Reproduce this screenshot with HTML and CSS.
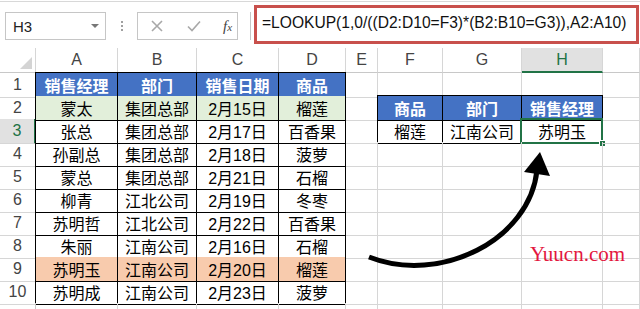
FILE: index.html
```html
<!DOCTYPE html>
<html lang="zh-CN">
<head>
    <meta charset="UTF-8">
    <title>LOOKUP 多条件查询</title>
    <link rel="stylesheet" href="styles.css">
</head>
<body>

<div class="toolbar">
    <div class="namebox">
        <span>H3</span>
        <span class="drop"></span>
    </div>
    <div class="dots"><i></i><i></i><i></i></div>
    <div class="funcbox">
        <svg width="12" height="12" viewBox="0 0 12 12"><path d="M1 1L11 11M11 1L1 11" stroke="#a8a8a8" stroke-width="1.6"/></svg>
        <svg width="14" height="12" viewBox="0 0 14 12"><path d="M1 6.5L5 10.5L13 1.5" stroke="#a8a8a8" stroke-width="1.6" fill="none"/></svg>
        <span class="fx">f<small>x</small></span>
    </div>
    <div class="formula-edge"></div>
    <div class="formula">=LOOKUP(1,0/((D2:D10=F3)*(B2:B10=G3)),A2:A10)</div>
</div>

<div class="sheet">
    <div class="row colhead">
        <div class="c corner"><span class="tri"></span></div>
        <div class="c">A</div><div class="c">B</div><div class="c">C</div><div class="c">D</div>
        <div class="c">E</div><div class="c">F</div><div class="c">G</div><div class="c active-col">H</div><div class="c"></div>
    </div>
    <div class="row">
        <div class="c rh">1</div>
        <div class="c th left top">销售经理</div><div class="c th top">部门</div><div class="c th top">销售日期</div><div class="c th top">商品</div>
        <div class="c"></div><div class="c"></div><div class="c"></div><div class="c"></div><div class="c"></div>
    </div>
    <div class="row">
        <div class="c rh">2</div>
        <div class="c tb green left">蒙太</div><div class="c tb green">集团总部</div><div class="c tb green">2月15日</div><div class="c tb green">榴莲</div>
        <div class="c"></div><div class="c th left top">商品</div><div class="c th top">部门</div><div class="c th top">销售经理</div><div class="c"></div>
    </div>
    <div class="row">
        <div class="c rh active-row">3</div>
        <div class="c tb left">张总</div><div class="c tb">集团总部</div><div class="c tb">2月17日</div><div class="c tb">百香果</div>
        <div class="c"></div><div class="c tb left">榴莲</div><div class="c tb">江南公司</div><div class="c tb sel">苏明玉</div><div class="c"></div>
    </div>
    <div class="row">
        <div class="c rh">4</div>
        <div class="c tb left">孙副总</div><div class="c tb">集团总部</div><div class="c tb">2月18日</div><div class="c tb">菠萝</div>
        <div class="c"></div><div class="c"></div><div class="c"></div><div class="c"></div><div class="c"></div>
    </div>
    <div class="row">
        <div class="c rh">5</div>
        <div class="c tb left">蒙总</div><div class="c tb">集团总部</div><div class="c tb">2月21日</div><div class="c tb">石榴</div>
        <div class="c"></div><div class="c"></div><div class="c"></div><div class="c"></div><div class="c"></div>
    </div>
    <div class="row">
        <div class="c rh">6</div>
        <div class="c tb left">柳青</div><div class="c tb">江北公司</div><div class="c tb">2月19日</div><div class="c tb">冬枣</div>
        <div class="c"></div><div class="c"></div><div class="c"></div><div class="c"></div><div class="c"></div>
    </div>
    <div class="row">
        <div class="c rh">7</div>
        <div class="c tb left">苏明哲</div><div class="c tb">江北公司</div><div class="c tb">2月22日</div><div class="c tb">百香果</div>
        <div class="c"></div><div class="c"></div><div class="c"></div><div class="c"></div><div class="c"></div>
    </div>
    <div class="row">
        <div class="c rh">8</div>
        <div class="c tb left">朱丽</div><div class="c tb">江南公司</div><div class="c tb">2月16日</div><div class="c tb">石榴</div>
        <div class="c"></div><div class="c"></div><div class="c"></div><div class="c"></div><div class="c"></div>
    </div>
    <div class="row">
        <div class="c rh">9</div>
        <div class="c tb orange left">苏明玉</div><div class="c tb orange">江南公司</div><div class="c tb orange">2月20日</div><div class="c tb orange">榴莲</div>
        <div class="c"></div><div class="c"></div><div class="c"></div><div class="c"></div><div class="c"></div>
    </div>
    <div class="row">
        <div class="c rh">10</div>
        <div class="c tb left">苏明成</div><div class="c tb">江南公司</div><div class="c tb">2月23日</div><div class="c tb">菠萝</div>
        <div class="c"></div><div class="c"></div><div class="c"></div><div class="c"></div><div class="c"></div>
    </div>
    <div class="row">
        <div class="c rh"></div>
        <div class="c"></div><div class="c"></div><div class="c"></div><div class="c"></div>
        <div class="c"></div><div class="c"></div><div class="c"></div><div class="c"></div><div class="c"></div>
    </div>
</div>

<!-- 标注箭头 -->
<svg class="arrow" width="640" height="309" viewBox="0 0 640 309">
    <path d="M369 257 C440 285, 530 240, 537 170" stroke="#000" stroke-width="5" fill="none"/>
    <path d="M540 152 L524 172 L550 176 Z" fill="#000"/>
</svg>

<div class="watermark">Yuucn.com</div>

</body>
</html>
```

FILE: styles.css
```css
body {
    margin: 0;
    width: 640px;
    height: 309px;
    overflow: hidden;
    background: #fff;
    font-family: "Liberation Sans", "Noto Sans CJK SC", sans-serif;
    color: #000;
}

/* 编辑栏 */
.toolbar {
    display: flex;
    align-items: flex-start;
    height: 46px;
    margin-top: 1px;
    border-top: 1px solid #d8d8d8;
    padding-left: 5px;
}
.namebox {
    display: flex;
    align-items: center;
    justify-content: space-between;
    box-sizing: border-box;
    width: 101px;
    height: 28px;
    margin-top: 10px;
    padding: 0 6px 0 7px;
    border: 1px solid #c6c6c6;
    font-size: 15px;
    color: #222;
}
.drop {
    width: 0;
    height: 0;
    border-left: 4px solid transparent;
    border-right: 4px solid transparent;
    border-top: 4px solid #777;
}
.dots {
    display: flex;
    flex-direction: column;
    align-items: center;
    gap: 2px;
    width: 31px;
    margin-top: 19px;
}
.dots i {
    width: 2px;
    height: 2px;
    background: #a0a0a0;
}
.funcbox {
    display: flex;
    align-items: center;
    box-sizing: border-box;
    width: 101px;
    height: 28px;
    margin-top: 10px;
    padding-left: 13px;
    border: 1px solid #c6c6c6;
}
.funcbox svg:nth-child(2) {
    margin-left: 24px;
}
.fx {
    margin-left: 22px;
    font-family: "Liberation Serif", serif;
    font-style: italic;
    font-size: 15px;
    color: #444;
}
.fx small {
    font-size: 11px;
}
.formula-edge {
    width: 1px;
    height: 28px;
    margin: 10px 0 0 12px;
    background: #c6c6c6;
}
.formula {
    box-sizing: border-box;
    width: 385px;
    height: 39px;
    margin: 3px 0 0 3px;
    padding: 6px 0 0 5px;
    border: 3px solid #c8504c;
    font-size: 15.6px;
    color: #111;
    white-space: nowrap;
}

/* 工作表网格 */
.row {
    display: grid;
    grid-template-columns: 36px 82px 79px 82px 67px 32px 65px 79px 81px 1fr;
    height: 23px;
}
.colhead {
    height: 25px;
}
.c {
    display: flex;
    align-items: center;
    justify-content: center;
    box-sizing: border-box;
    border-right: 1px solid #d6d6d6;
    border-bottom: 1px solid #d6d6d6;
    font-size: 16px;
    white-space: nowrap;
    position: relative;
}
.colhead .c {
    color: #444;
    border-bottom-color: #c8c8c8;
}
.corner {
    justify-content: flex-end;
    align-items: flex-end;
    padding: 0 3px 3px 0;
}
.tri {
    width: 0;
    height: 0;
    border-left: 12px solid transparent;
    border-bottom: 12px solid #d4d4d4;
}
.rh {
    color: #444;
    border-right-color: #c8c8c8;
}
.active-col {
    background: #e1e1e1;
    color: #217346 !important;
    border-bottom: 2px solid #217346 !important;
}
.active-row {
    background: #e1e1e1;
    color: #217346;
    border-right: 2px solid #217346;
}

/* 表格区域 */
.tb, .th {
    border-right-color: #000;
    border-bottom-color: #000;
}
.th {
    background: #4472c4;
    color: #fff;
    font-weight: bold;
}
.left {
    box-shadow: -1px 0 0 #000;
}
.top {
    box-shadow: 0 -1px 0 #000;
}
.left.top {
    box-shadow: -1px 0 0 #000, 0 -1px 0 #000, -1px -1px 0 #000;
}
.green {
    background: #e2efda;
}
.orange {
    background: #f8cbad;
}
.sel::before {
    content: "";
    position: absolute;
    left: -2px;
    top: -1px;
    right: -1px;
    bottom: -1px;
    border: 2px solid #217346;
}
.sel::after {
    content: "";
    position: absolute;
    right: -4px;
    bottom: -4px;
    width: 5px;
    height: 5px;
    background: #217346;
    border: 1px solid #fff;
}

/* 标注 */
.arrow {
    position: absolute;
    left: 0;
    top: 0;
    pointer-events: none;
}
.watermark {
    position: absolute;
    left: 530px;
    top: 242px;
    font-family: "Liberation Serif", serif;
    font-size: 21px;
    color: #e3173e;
}
```
